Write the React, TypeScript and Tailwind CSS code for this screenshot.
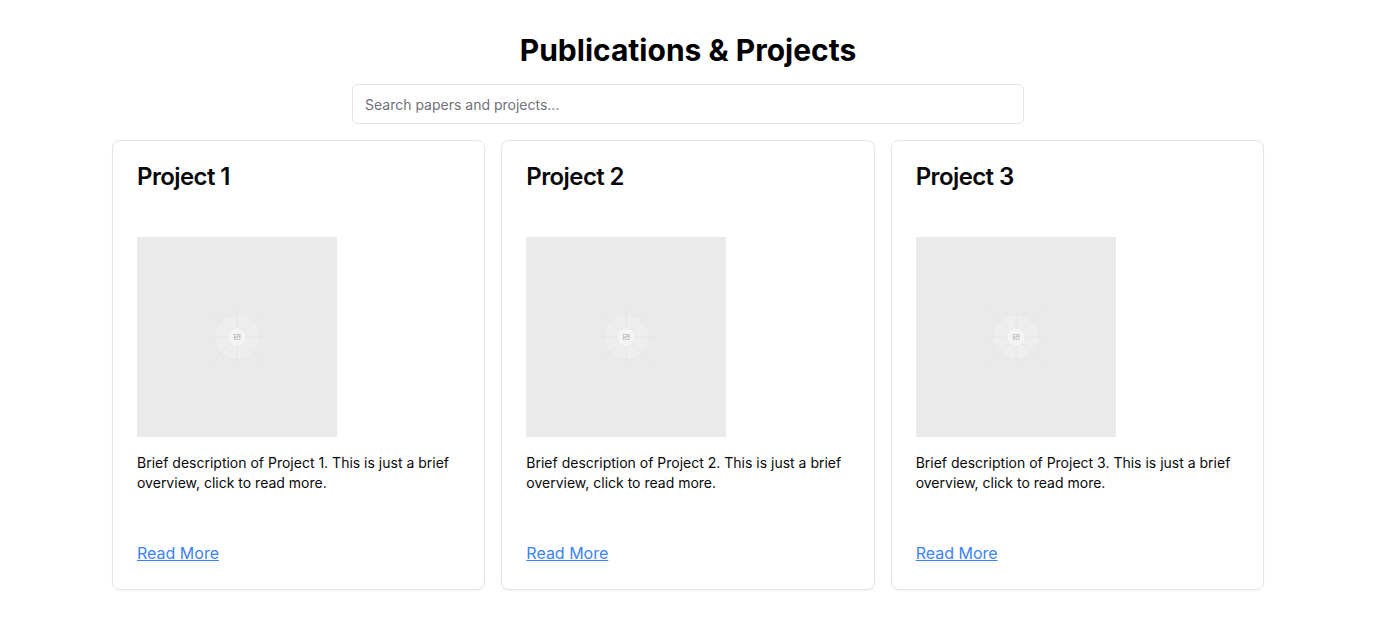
const projects = [1, 2, 3].map((n) => ({
  id: n,
  title: `Project ${n}`,
  description: `Brief description of Project ${n}. This is just a brief overview, click to read more.`,
}));

const guides = [
  { id: "a", x1: 404.4, y1: 404.4, x2: 795.7, y2: 795.7 },
  { id: "b", x1: 404.8, y1: 599.9, x2: 796.6, y2: 599.8 },
  { id: "c", x1: 600.7, y1: 404, x2: 600.6, y2: 795.7 },
  { id: "d", x1: 404.4, y1: 795.7, x2: 795.7, y2: 404.4 },
];

function Placeholder({ id, label }: { id: number; label: string }) {
  return (
    <svg role="img" aria-label={label} viewBox="0 0 1200 1200" fill="none" className="block size-[200px]">
      <defs>
        {guides.map((g) => (
          <linearGradient
            key={g.id}
            id={`guide-${id}-${g.id}`}
            gradientUnits="userSpaceOnUse"
            x1={g.x1}
            y1={g.y1}
            x2={g.x2}
            y2={g.y2}
          >
            <stop stopColor="#C9C9C9" stopOpacity="0" />
            <stop offset=".208" stopColor="#C9C9C9" />
            <stop offset=".792" stopColor="#C9C9C9" />
            <stop offset="1" stopColor="#C9C9C9" stopOpacity="0" />
          </linearGradient>
        ))}
      </defs>
      <rect width="1200" height="1200" fill="#EAEAEA" rx="3" />
      <g opacity=".5">
        <circle cx="600.7" cy="599.9" r="136.6" fill="#FAFAFA" opacity=".5" />
        <circle cx="600.7" cy="599.9" r="135.4" stroke="#C9C9C9" strokeWidth="2.418" opacity=".5" />
        {guides.map((g) => (
          <line
            key={g.id}
            x1={g.x1}
            y1={g.y1}
            x2={g.x2}
            y2={g.y2}
            stroke={`url(#guide-${id}-${g.id})`}
            strokeWidth="2.418"
          />
        ))}
        <circle cx="600.7" cy="599.9" r="56.8" fill="#fff" />
        <path
          fill="#666"
          fillRule="evenodd"
          clipRule="evenodd"
          d="M616.426 586.58h-31.434v16.176l3.553-3.554.531-.531h9.068l.074-.074 8.463-8.463h2.565l7.18 7.181V586.58Zm-15.715 14.654 3.698 3.699 1.283 1.282-2.565 2.565-1.282-1.283-5.2-5.199h-6.066l-5.514 5.514-.073.073v2.876a2.418 2.418 0 0 0 2.418 2.418h26.598a2.418 2.418 0 0 0 2.418-2.418v-8.317l-8.463-8.463-7.181 7.181-.071.072Zm-19.347 5.442v4.085a6.045 6.045 0 0 0 6.046 6.045h26.598a6.044 6.044 0 0 0 6.045-6.045v-7.108l1.356-1.355-1.282-1.283-.074-.073v-17.989h-38.689v23.43l-.146.146.146.147Z"
        />
        <circle cx="600.7" cy="599.9" r="55.6" stroke="#C9C9C9" strokeWidth="2.418" />
      </g>
    </svg>
  );
}

export default function App() {
  return (
    <main className="mx-auto max-w-6xl py-8 font-['Inter',sans-serif] text-black">
      <h1 className="mb-4 text-center text-3xl font-bold">Publications &amp; Projects</h1>
      <div className="mx-auto mb-4 max-w-2xl">
        <input
          type="search"
          aria-label="Search papers and projects"
          placeholder="Search papers and projects..."
          className="block h-10 w-full rounded-md border border-[#e4e4e7] bg-white px-3 py-2 text-sm placeholder:text-[#71717a]"
        />
      </div>
      <div className="grid grid-cols-1 gap-4 md:grid-cols-3">
        {projects.map((p) => (
          <article key={p.id} className="rounded-lg border border-[#e4e4e7] bg-white text-[#09090b] shadow-xs">
            <div className="p-6">
              <h2 className="text-2xl leading-none font-semibold tracking-tight">{p.title}</h2>
            </div>
            <div className="p-6">
              <Placeholder id={p.id} label={p.title} />
              <p className="mt-4 text-sm">{p.description}</p>
            </div>
            <div className="p-6">
              <a href="#" className="block w-fit text-[#3b82f6] underline">
                Read More
              </a>
            </div>
          </article>
        ))}
      </div>
    </main>
  );
}
